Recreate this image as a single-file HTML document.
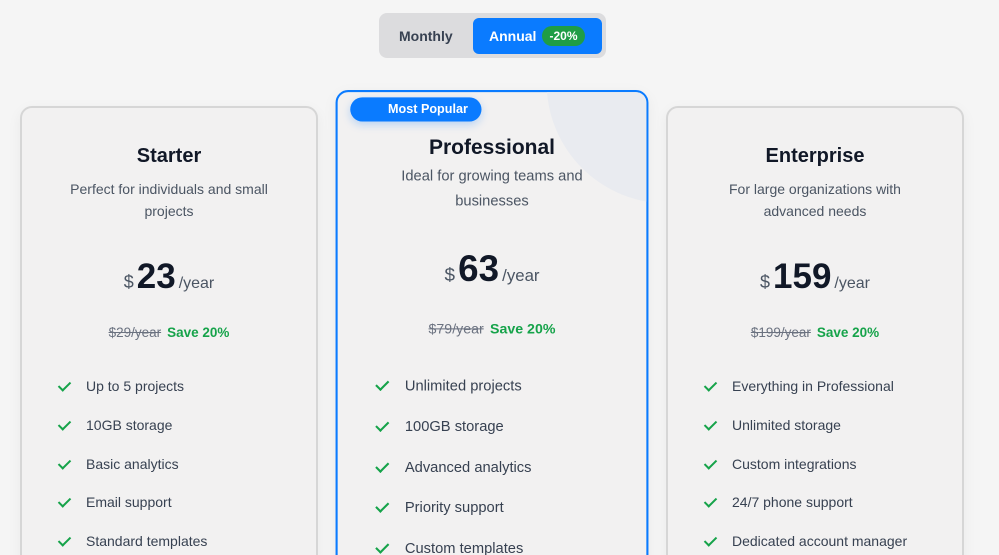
<!DOCTYPE html>
<html><head><meta charset="utf-8"><style>
*{box-sizing:border-box;margin:0;padding:0}
html,body{width:999px;height:555px;overflow:hidden}
body{background:#f5f5f5;font-family:"Liberation Sans",sans-serif;color:#111827;position:relative}
.wrap{position:absolute;left:0;top:0;width:999px;height:555px;overflow:hidden}
.toggle{position:absolute;left:379px;top:13px;width:227px;height:45px;background:#dcdcde;border-radius:8px}
.mon{position:absolute;left:20px;top:15px;font-size:14px;font-weight:bold;color:#374151}
.ann{position:absolute;left:94px;top:5px;width:129px;height:36px;background:#0a7bff;border-radius:6px;color:#fff;font-weight:bold;font-size:14px}
.ann span.t{position:absolute;left:16px;top:10px}
.ann .b{position:absolute;left:69px;top:8px;width:43px;height:20px;border-radius:10px;background:#1f9d46;font-size:12px;text-align:center;line-height:20px}
.card{position:absolute;width:298px;height:470px;border:2px solid #d6d6d6;border-radius:12px;background:#f2f1f1;overflow:hidden;box-shadow:0 4px 14px rgba(0,0,0,.05)}
.card h2{position:absolute;top:37px;left:0;right:0;text-align:center;font-size:20px;font-weight:bold;color:#111827}
.card .d{position:absolute;top:70px;left:36px;right:36px;text-align:center;font-size:14px;line-height:22px;color:#4b5563}
.price{position:absolute;top:149px;left:0;right:0;text-align:center;white-space:nowrap}
.price .s{font-size:18px;color:#4b5563}
.price .n{font-size:35px;font-weight:bold;color:#111827;margin:0 3px}
.price .y{font-size:16px;color:#4b5563}
.old{position:absolute;top:217px;left:0;right:0;text-align:center;font-size:13.5px}
.old s{color:#6b7280}
.old b{color:#16a34a;margin-left:6px}
ul{position:absolute;top:270px;left:35px;list-style:none}
li{height:38.8px;font-size:14px;color:#374151;position:relative;padding-left:29px}
li:before{content:"";position:absolute;left:4px;top:1px;width:5px;height:10px;border:solid #16a34a;border-width:0 2px 2px 0;transform:rotate(45deg)}
.mid{border-color:#0a7bff;transform:scale(1.05);transform-origin:top center}
.blob{position:absolute;left:199px;top:-124px;width:230px;height:230px;border-radius:50%;background:#e9ebf0}
.pop{position:absolute;left:12px;top:5px;width:125px;height:23px;border-radius:12px;background:#0a7bff;color:#fff;font-size:12px;font-weight:bold;line-height:23px;padding-left:36px;box-shadow:0 3px 8px rgba(10,123,255,.25)}
.mid h2{top:42px}.mid .d{top:67px;line-height:24px;font-size:14px}.mid .price{top:149px}.mid .old{top:218px}.mid ul{top:271px}
</style></head><body><div class="wrap">
<div class="toggle"><span class="mon">Monthly</span><div class="ann"><span class="t">Annual</span><span class="b">-20%</span></div></div>

<div class="card" style="left:20px;top:106px">
<h2>Starter</h2><div class="d">Perfect for individuals and small projects</div>
<div class="price"><span class="s">$</span><span class="n">23</span><span class="y">/year</span></div>
<div class="old"><s>$29/year</s><b>Save 20%</b></div>
<ul><li>Up to 5 projects</li><li>10GB storage</li><li>Basic analytics</li><li>Email support</li><li>Standard templates</li></ul>
</div>

<div class="card mid" style="left:343px;top:90px">
<div class="blob"></div><div class="pop">Most Popular</div>
<h2>Professional</h2><div class="d">Ideal for growing teams and businesses</div>
<div class="price"><span class="s">$</span><span class="n">63</span><span class="y">/year</span></div>
<div class="old"><s>$79/year</s><b>Save 20%</b></div>
<ul><li>Unlimited projects</li><li>100GB storage</li><li>Advanced analytics</li><li>Priority support</li><li>Custom templates</li></ul>
</div>

<div class="card" style="left:666px;top:106px">
<h2>Enterprise</h2><div class="d">For large organizations with advanced needs</div>
<div class="price"><span class="s">$</span><span class="n">159</span><span class="y">/year</span></div>
<div class="old"><s>$199/year</s><b>Save 20%</b></div>
<ul><li>Everything in Professional</li><li>Unlimited storage</li><li>Custom integrations</li><li>24/7 phone support</li><li>Dedicated account manager</li></ul>
</div>
</div></body></html>
